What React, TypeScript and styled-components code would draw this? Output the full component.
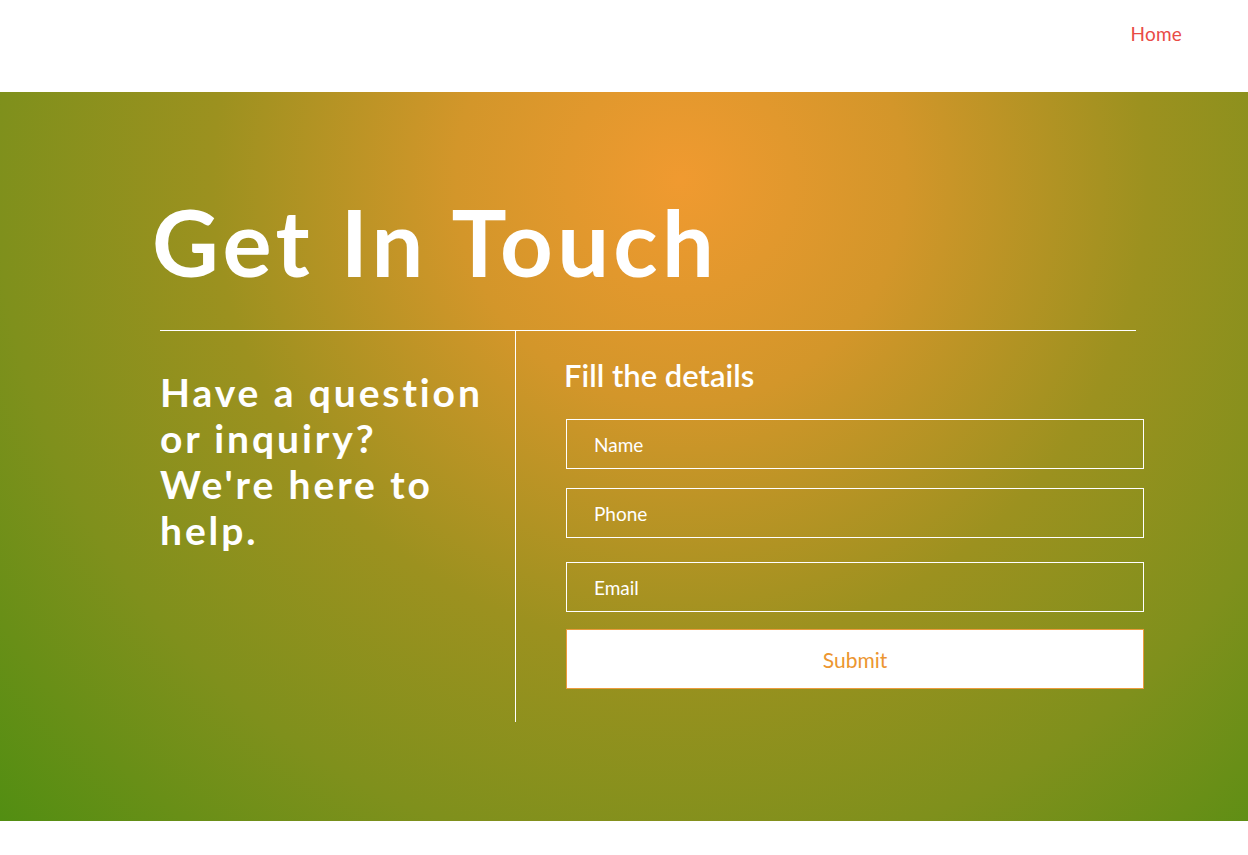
import styled, { createGlobalStyle } from "styled-components";

const GlobalStyle = createGlobalStyle`
  * { box-sizing: border-box; }
  body {
    margin: 0;
    font-family: "Lato", "Open Sans", sans-serif;
    background: #fff;
  }
`;

const Header = styled.header`
  height: 92px;
  display: flex;
  justify-content: flex-end;
  align-items: flex-start;
  padding: 22px 66px 0 0;
`;

const NavLink = styled.a`
  font-size: 19px;
  font-weight: 400;
  color: #e94b45;
  text-decoration: none;
  letter-spacing: 0.2px;
`;

const Hero = styled.section`
  height: 729px;
  padding: 104px 0 0 160px;
  background: radial-gradient(
    circle farthest-corner at 680px 88px,
    #f09a30 0%,
    #d3962a 24%,
    #9c911f 50%,
    #7f901c 73%,
    #528e12 100%
  );
  color: #fff;
`;

const Title = styled.h1`
  margin: 0 0 42px -8px;
  font-size: 92px;
  line-height: 92px;
  font-weight: 700;
  letter-spacing: 4.3px;
`;

const Columns = styled.div`
  display: grid;
  grid-template-columns: 356px 627px;
  width: 976px;
  border-top: 1px solid #fff;
`;

const LeftCol = styled.div`
  height: 391px;
  border-right: 1px solid #fff;
  padding-top: 38px;
`;

const Lead = styled.h2`
  margin: 0;
  font-size: 39px;
  line-height: 46px;
  font-weight: 700;
  letter-spacing: 2.9px;
`;

const RightCol = styled.div`
  padding: 26px 0 0 48px;
`;

const FormTitle = styled.h3`
  margin: 0 0 26px;
  font-size: 31px;
  line-height: 36px;
  font-weight: 600;
  letter-spacing: 0;
`;

const Form = styled.form`
  display: flex;
  flex-direction: column;
  margin-left: 2px;
  width: 578px;
`;

const Input = styled.input<{ $top: number }>`
  height: 50px;
  margin-top: ${({ $top }) => $top}px;
  padding: 0 27px;
  border: 1px solid #fff;
  background: transparent;
  color: #fff;
  font-family: "Lato", "Open Sans", sans-serif;
  font-size: 19px;
  outline: none;

  &::placeholder {
    color: #fff;
    opacity: 1;
  }
`;

const Submit = styled.button`
  height: 60px;
  margin-top: 17px;
  border: 1px solid #ea9b3c;
  background: #fff;
  color: #ec9630;
  font-family: "Lato", "Open Sans", sans-serif;
  font-size: 21px;
  font-weight: 400;
  cursor: pointer;
`;

export default function App() {
  return (
    <>
      <GlobalStyle />
      <Header>
        <NavLink href="#">Home</NavLink>
      </Header>
      <Hero>
        <Title>Get In Touch</Title>
        <Columns>
          <LeftCol>
            <Lead>
              Have a question
              <br />
              or inquiry?
              <br />
              We're here to
              <br />
              help.
            </Lead>
          </LeftCol>
          <RightCol>
            <FormTitle>Fill the details</FormTitle>
            <Form onSubmit={(e) => e.preventDefault()}>
              <Input $top={0} placeholder="Name" />
              <Input $top={19} placeholder="Phone" />
              <Input $top={24} placeholder="Email" />
              <Submit type="submit">Submit</Submit>
            </Form>
          </RightCol>
        </Columns>
      </Hero>
    </>
  );
}
